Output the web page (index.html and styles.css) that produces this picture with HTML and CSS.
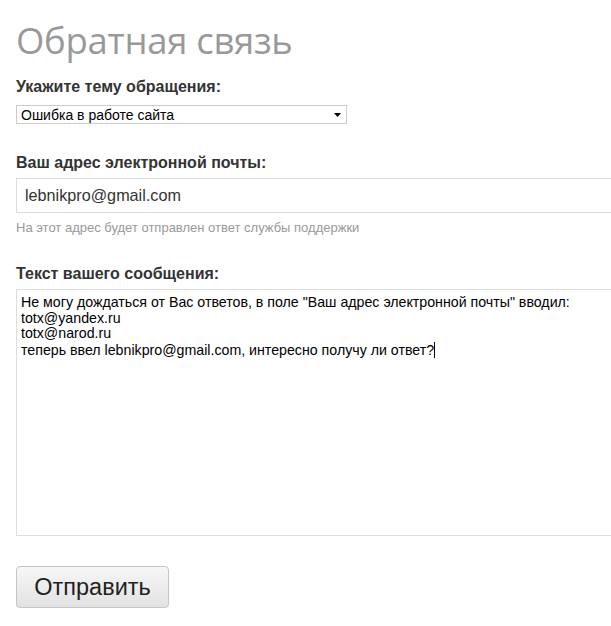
FILE: index.html
```html
<!DOCTYPE html>
<html lang="ru">
<head>
<meta charset="utf-8">
<link rel="stylesheet" href="styles.css">
</head>
<body>
<div class="page">
  <h1 class="title">Обратная связь</h1>
  <form class="form">
    <div class="field">
      <label class="label">Укажите тему обращения:</label>
      <div class="select">
        <span class="select-text">Ошибка в работе сайта</span>
        <svg class="select-arrow" width="7" height="4" viewBox="0 0 7 4"><path d="M0 0H7L3.5 4Z" fill="#000"/></svg>
      </div>
    </div>
    <div class="field">
      <label class="label">Ваш адрес электронной почты:</label>
      <div class="input">lebnikpro@gmail.com</div>
      <div class="hint">На этот адрес будет отправлен ответ службы поддержки</div>
    </div>
    <div class="field">
      <label class="label">Текст вашего сообщения:</label>
      <div class="textarea">Не могу дождаться от Вас ответов, в поле "Ваш адрес электронной почты" вводил:<br>totx@yandex.ru<br>totx@narod.ru<br>теперь ввел lebnikpro@gmail.com, интересно получу ли ответ?<span class="caret"></span></div>
    </div>
    <div class="actions">
      <button type="button" class="button">Отправить</button>
    </div>
  </form>
</div>
</body>
</html>
```

FILE: styles.css
```css
html, body {
  margin: 0;
  padding: 0;
  background: #fff;
  overflow: hidden;
}
.page {
  padding: 0 0 0 16px;
  font-family: "Liberation Sans", Arial, sans-serif;
  color: #333;
}
.title {
  margin: 0;
  padding-top: 15px;
  font-family: "Open Sans", sans-serif;
  font-weight: 400;
  font-size: 36.5px;
  line-height: 50px;
  color: #999;
  letter-spacing: -0.3px;
}
.form {
  display: flex;
  flex-direction: column;
}
.field {
  display: flex;
  flex-direction: column;
}
.label {
  font-weight: bold;
  font-size: 16px;
  line-height: 19px;
  color: #333;
  margin-top: 12px;
  margin-bottom: 6px;
}
.field + .field .label {
  margin-top: 29px;
}
.select {
  width: 320px;
  height: 17px;
  margin-top: 3px;
  border: 1px solid #ccc;
  display: flex;
  align-items: center;
  justify-content: space-between;
  padding: 0 5px 0 4px;
  font-size: 14px;
  color: #000;
}
.select-arrow {
  margin-top: 1px;
}
.input {
  height: 33px;
  border: 1px solid #ddd;
  border-right: none;
  padding-left: 8px;
  font-size: 16.2px;
  line-height: 33px;
  color: #333;
}
.hint {
  font-size: 13px;
  color: #999;
  margin-top: 7px;
  line-height: 15px;
}
.textarea {
  height: 240px;
  border: 1px solid #ddd;
  border-right: none;
  padding: 5px 0 0 4px;
  font-size: 14.2px;
  line-height: 15.7px;
  color: #000;
  white-space: nowrap;
}
.caret {
  display: inline-block;
  width: 1px;
  height: 16px;
  background: #000;
  vertical-align: -3px;
}
.actions {
  margin-top: 30px;
}
.button {
  width: 153px;
  height: 42px;
  border: 1px solid #c5c5c5;
  border-radius: 4px;
  background: linear-gradient(#f6f6f6, #e2e2e2);
  font-family: "Liberation Sans", Arial, sans-serif;
  font-size: 23.5px;
  color: #222;
  padding: 0;
}
```
